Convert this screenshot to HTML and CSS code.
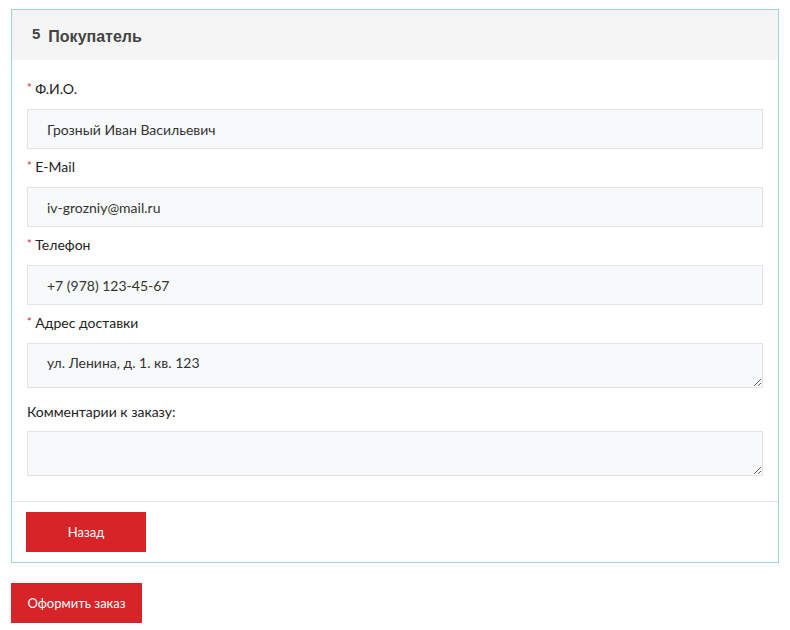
FILE: index.html
```html
<!DOCTYPE html>
<html lang="ru">
<head>
<meta charset="utf-8">
<title>Покупатель</title>
<link rel="stylesheet" href="styles.css">
</head>
<body>
<div class="step">
  <div class="step-head">
    <span class="step-num">5</span>
    <span class="step-title">Покупатель</span>
  </div>
  <div class="step-body">
    <div class="field">
      <label class="label"><span class="req">*</span> Ф.И.О.</label>
      <input class="input" type="text" value="Грозный Иван Васильевич">
    </div>
    <div class="field">
      <label class="label"><span class="req">*</span> E-Mail</label>
      <input class="input" type="text" value="iv-grozniy@mail.ru">
    </div>
    <div class="field">
      <label class="label"><span class="req">*</span> Телефон</label>
      <input class="input" type="text" value="+7 (978) 123-45-67">
    </div>
    <div class="field field-area">
      <label class="label"><span class="req">*</span> Адрес доставки</label>
      <textarea class="input area">ул. Ленина, д. 1. кв. 123</textarea>
    </div>
    <div class="field field-area">
      <label class="label">Комментарии к заказу:</label>
      <textarea class="input area"></textarea>
    </div>
  </div>
  <div class="step-foot">
    <button class="btn btn-back" type="button">Назад</button>
  </div>
</div>
<button class="btn btn-order" type="button">Оформить заказ</button>
</body>
</html>
```
FILE: styles.css
```css
* { box-sizing: border-box; }
body {
  margin: 9px 0 0 11px;
  width: 768px;
  font-family: Lato, "Open Sans", "Liberation Sans", sans-serif;
  color: #222;
  background: #fff;
}
.step {
  border: 1px solid #9fd3dc;
  background: #fff;
}
.step-head {
  height: 50px;
  background: #f5f5f5;
  display: flex;
  align-items: center;
  padding: 3px 0 0 20px;
}
.step-num {
  font-family: "Liberation Sans", Arial, sans-serif;
  font-weight: bold;
  font-size: 15px;
  color: #444;
  margin-right: 8px;
  position: relative;
  top: -3px;
}
.step-title {
  font-family: "Liberation Sans", Arial, sans-serif;
  font-weight: bold;
  font-size: 16px;
  color: #444;
}
.step-body {
  padding: 20px 15px 25px 15px;
  border-bottom: 1px solid #e3e3e3;
}
.field {
  margin-bottom: 9px;
}
.field-area {
  margin-bottom: 15px;
}
.field:last-child { margin-bottom: 0; }
.label {
  display: block;
  font-size: 14px;
  line-height: 18px;
  color: #222;
  margin-bottom: 10px;
}
.req {
  color: #d62428;
  font-size: 11px;
  position: relative;
  top: -2px;
}
.input {
  display: block;
  width: 100%;
  height: 40px;
  border: 1px solid #e2e2e2;
  background: #f8f9fa;
  padding: 0 19px;
  font-family: Lato, "Open Sans", "Liberation Sans", sans-serif;
  font-size: 14px;
  color: #333;
  outline: none;
}
.area {
  height: 45px;
  padding: 10px 19px;
  resize: vertical;
  line-height: 18px;
}
.step-foot {
  padding: 10px 14px 10px 14px;
}
.btn {
  display: block;
  height: 40px;
  border: none;
  background: #d62428;
  color: #fff;
  font-family: Lato, "Open Sans", "Liberation Sans", sans-serif;
  font-size: 13px;
  cursor: pointer;
}
.btn-back {
  width: 120px;
}
.btn-order {
  margin-top: 20px;
  width: 131px;
}
```
